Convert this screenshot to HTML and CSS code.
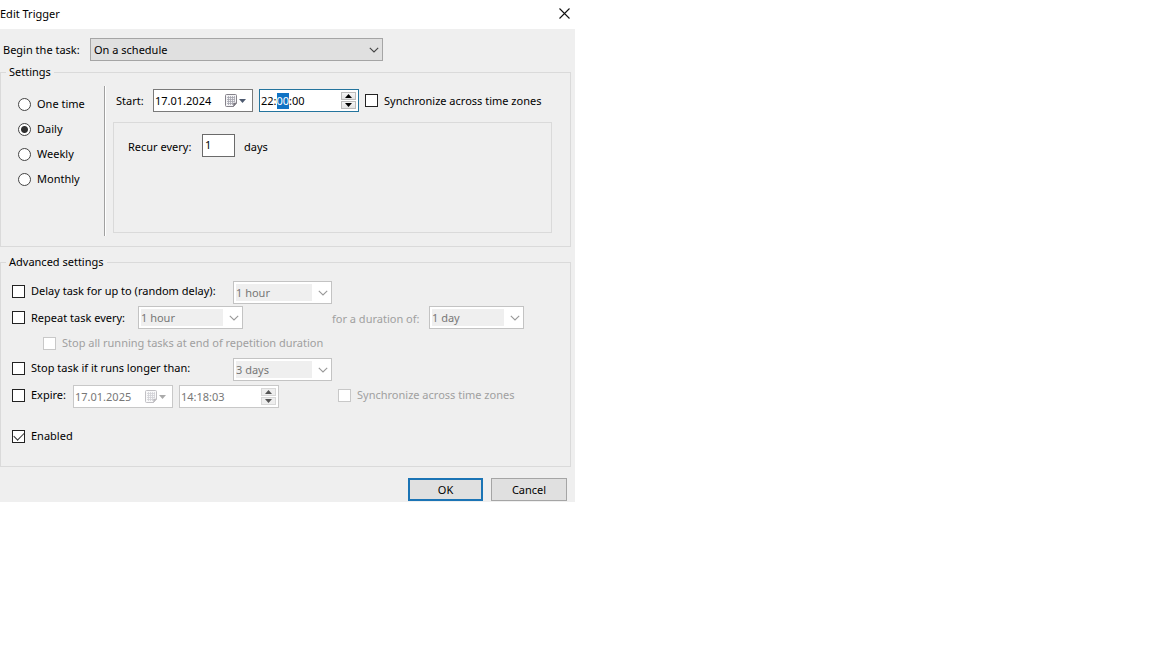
FILE: index.html
```html
<!DOCTYPE html>
<html lang="en">
<head>
<meta charset="utf-8">
<title>Edit Trigger</title>
<link rel="stylesheet" href="styles.css">
</head>
<body>
<svg class="symbols" aria-hidden="true">
  <symbol id="chevron" viewBox="0 0 10 6"><path d="M.8 .8 5 5 9.200 .8" fill="none" stroke="currentColor" stroke-width="1.100"/></symbol>
  <symbol id="up" viewBox="0 0 7 4"><path d="M0 4 3.500 0 7 4z" fill="currentColor"/></symbol>
  <symbol id="down" viewBox="0 0 7 4"><path d="M0 0h7L3.500 4z" fill="currentColor"/></symbol>
  <symbol id="calendar" viewBox="0 0 12 13">
    <path d="M1.500.5h9a1 1 0 0 1 1 1V9L8.500 12.500h-7a1 1 0 0 1-1-1v-10a1 1 0 0 1 1-1z" fill="#f4f4f6" stroke="#85828a"/>
    <path d="M2 3.500h8M2 5.500h8M2 7.500h8M2 9.500h6M3.500 2v9M5.500 2v9M7.500 2v9M9.500 2v6" stroke="#a5a5ae" stroke-width=".8"/>
    <path d="M11.500 9 8.500 12.500V9z" fill="#77747c" stroke="#85828a" stroke-width=".6"/>
  </symbol>
</svg>
<form class="dialog">
  <header class="titlebar">
    <h1 class="title">Edit Trigger</h1>
    <button type="button" class="close" aria-label="Close"><svg width="11" height="11" viewBox="0 0 11 11"><path d="M.5.500 10.500 10.500M10.500.500.500 10.500" stroke="#111" stroke-width="1.100"/></svg></button>
  </header>

  <div class="begin">
    <label for="begin">Begin the task:</label>
    <span class="combo combo-begin">
      <select id="begin"><option>On a schedule</option></select>
      <svg class="chevron"><use href="#chevron"/></svg>
    </span>
  </div>

  <fieldset class="group settings">
    <legend>Settings</legend>
    <div class="settings-body">
      <div class="frequency">
        <label class="option"><input type="radio" name="freq">One time</label>
        <label class="option"><input type="radio" name="freq" checked>Daily</label>
        <label class="option"><input type="radio" name="freq">Weekly</label>
        <label class="option"><input type="radio" name="freq">Monthly</label>
      </div>
      <div class="schedule">
        <div class="start-row">
          <label class="start-label" for="start-date">Start:</label>
          <span class="field">
            <input id="start-date" type="text" value="17.01.2024">
            <button type="button" class="picker" aria-label="Open calendar"><svg class="calendar"><use href="#calendar"/></svg><svg class="arrow"><use href="#down"/></svg></button>
          </span>
          <span class="field field-active">
            <input id="start-time" type="text" value="22:00:00" aria-label="Start time">
            <span class="spinner">
              <button type="button" aria-label="Increase"><svg class="arrow"><use href="#up"/></svg></button>
              <button type="button" aria-label="Decrease"><svg class="arrow"><use href="#down"/></svg></button>
            </span>
          </span>
          <label class="option"><input type="checkbox">Synchronize across time zones</label>
        </div>
        <div class="recur">
          <label class="recur-label" for="recur">Recur every:</label>
          <input id="recur" class="recur-input" type="text" value="1">
          <span>days</span>
        </div>
      </div>
    </div>
  </fieldset>

  <fieldset class="group advanced">
    <legend>Advanced settings</legend>
    <div class="row">
      <label class="option label-wide"><input type="checkbox">Delay task for up to (random delay):</label>
      <span class="combo combo-off combo-medium">
        <select disabled aria-label="Random delay"><option>1 hour</option></select>
        <svg class="chevron"><use href="#chevron"/></svg>
      </span>
    </div>
    <div class="row row-repeat">
      <label class="option label-repeat"><input type="checkbox">Repeat task every:</label>
      <span class="combo combo-off combo-large">
        <select disabled aria-label="Repeat interval"><option>1 hour</option></select>
        <svg class="chevron"><use href="#chevron"/></svg>
      </span>
      <label class="duration-label" for="duration">for a duration of:</label>
      <span class="combo combo-off combo-small">
        <select id="duration" disabled><option>1 day</option></select>
        <svg class="chevron"><use href="#chevron"/></svg>
      </span>
    </div>
    <div class="row row-nested">
      <label class="option option-off"><input type="checkbox" disabled>Stop all running tasks at end of repetition duration</label>
    </div>
    <div class="row">
      <label class="option label-wide"><input type="checkbox">Stop task if it runs longer than:</label>
      <span class="combo combo-off combo-medium">
        <select disabled aria-label="Maximum run time"><option>3 days</option></select>
        <svg class="chevron"><use href="#chevron"/></svg>
      </span>
    </div>
    <div class="row row-expire">
      <label class="option label-expire"><input type="checkbox">Expire:</label>
      <span class="field field-off">
        <input type="text" value="17.01.2025" disabled aria-label="Expiry date">
        <button type="button" class="picker" disabled aria-label="Open calendar"><svg class="calendar"><use href="#calendar"/></svg><svg class="arrow"><use href="#down"/></svg></button>
      </span>
      <span class="field field-off expire-time">
        <input type="text" value="14:18:03" disabled aria-label="Expiry time">
        <span class="spinner">
          <button type="button" disabled aria-label="Increase"><svg class="arrow"><use href="#up"/></svg></button>
          <button type="button" disabled aria-label="Decrease"><svg class="arrow"><use href="#down"/></svg></button>
        </span>
      </span>
      <label class="option option-off expire-sync"><input type="checkbox" disabled>Synchronize across time zones</label>
    </div>
    <div class="row row-enabled">
      <label class="option"><input type="checkbox" checked>Enabled</label>
    </div>
  </fieldset>

  <footer class="actions">
    <button type="submit" class="button button-default">OK</button>
    <button type="button" class="button">Cancel</button>
  </footer>
</form>
<script src="script.js"></script>
</body>
</html>
```
FILE: styles.css
```css
* { box-sizing: border-box; }

body {
  margin: 0;
  background: #fff;
  color: #000;
  font: 11px/16px "Noto Sans", "Open Sans", sans-serif;
}

input, select, button { font: inherit; color: inherit; margin: 0; }
svg { display: block; }
.symbols { position: absolute; width: 0; height: 0; }

.dialog { max-width: 575px; background: #efefef; white-space: nowrap; }

.titlebar {
  display: flex;
  align-items: center;
  justify-content: space-between;
  height: 29px;
  padding: 0 4px 2px 0;
  background: #fff;
}
.title { margin: 0; font-size: 11px; font-weight: 400; }
.close { display: grid; place-items: center; border: 0; padding: 0; width: 13px; height: 21px; background: none; }

.begin { display: flex; align-items: center; padding: 9px 0 3px 3px; }
.begin label { width: 87px; padding-top: 1px; }

/* Drop-downs */
.combo { display: grid; position: relative; color: #000; }
.combo select {
  appearance: none;
  width: 100%;
  height: 23px;
  padding: 0 20px 0 3px;
  border: 1px solid #a5a5a5;
  border-radius: 0;
  background: #e0e0e0;
  opacity: 1;
}
.chevron { position: absolute; right: 4px; top: 9px; width: 10px; height: 6px; color: #444; pointer-events: none; }
.combo-begin { width: 293px; }
.combo-medium { width: 99px; }
.combo-large { width: 105px; }
.combo-small { width: 95px; }
.combo-off select {
  padding-left: 2px;
  border-color: #c3c3c3;
  color: #777;
  background: linear-gradient(#efefef, #efefef) 2px 2px / calc(100% - 21px) calc(100% - 4px) no-repeat #fff;
}
.combo-off .chevron { color: #999; }

/* Group boxes */
.group { min-width: 0; margin: 0 4px 0 0; padding: 0; border: 1px solid #dadada; }
.group legend { margin-left: 5px; padding: 0 3px; }

/* Tick boxes and radio buttons */
.option { display: flex; align-items: center; gap: 6px; }
.option input {
  appearance: none;
  flex: none;
  display: grid;
  place-items: center;
  width: 13px;
  height: 13px;
  border: 1px solid #222;
  background: #fff;
}
.option input[type="radio"] { border-radius: 50%; border-color: #444; }
.option input[type="radio"]:checked { background: radial-gradient(circle, #303030 3px, #fff 4px); }
.option input[type="checkbox"]:checked::after {
  content: "";
  width: 9px;
  height: 5px;
  margin-bottom: 3px;
  border: solid #333;
  border-width: 0 0 1px 1px;
  transform: rotate(-45deg);
}
.option-off { color: #a0a0a0; }
.option-off input { border-color: #c8c8c8; }

.settings-body { display: flex; padding: 6px 18px 10px 17px; }
.frequency {
  display: flex;
  flex-direction: column;
  gap: 9px;
  width: 87px;
  padding-top: 10px;
  border-right: 1px solid #a0a0a0;
  box-shadow: 1px 0 #fff;
}
.schedule { flex: 1; padding: 3px 0 3px 8px; }
.start-row { display: flex; align-items: center; gap: 6px; }
.start-label { width: 31px; margin-left: 3px; }

/* Date and time fields */
.field { display: flex; width: 100px; height: 23px; border: 1px solid #7a7a7a; background: #fff; }
.field input { flex: 1; min-width: 0; padding: 0 0 0 1px; border: 0; outline: 0; background: none; }
.field input::selection { color: #fff; background: #1173c4; }
.field-active { border-color: #24749d; }
.picker { display: flex; align-items: center; gap: 2px; padding: 0 6px 0 0; border: 0; background: none; color: #4d5a70; }
.calendar { width: 12px; height: 13px; }
.arrow { width: 7px; height: 4px; }
.spinner { display: grid; gap: 1px; width: 15px; margin: 2px 2px 2px 0; }
.spinner button {
  display: grid;
  place-items: center;
  min-height: 0;
  padding: 0;
  border: 1px solid #bbb;
  background: linear-gradient(#f5f5f5, #e3e3e3);
}
.field-off { border-color: #c8c8c8; color: #777; }
.field-off .picker { color: #aaa; }
.field-off .calendar { opacity: .5; }
.field-off .spinner button { border-color: #d8d8d8; background: #eee; color: #555; }

.recur {
  display: flex;
  align-items: flex-start;
  height: 111px;
  margin-top: 10px;
  padding: 11px 14px;
  border: 1px solid #dadada;
  line-height: 26px;
}
.recur-label { width: 74px; }
.recur-input { width: 33px; height: 23px; margin-right: 9px; padding: 0 2px 2px; border: 1px solid #6a6a6a; }

.advanced { margin-top: 7px; padding: 11px 11px 22px; }
.advanced legend { margin-left: -6px; }
.row { display: flex; align-items: center; }
.row-repeat { margin-top: 2px; }
.row-nested { padding: 6px 0 7px 31px; }
.row-expire { margin-top: 4px; }
.row-enabled { margin-top: 20px; }
.label-wide { width: 221px; padding-bottom: 3px; }
.label-repeat { width: 126px; }
.label-expire { width: 61px; padding-bottom: 3px; }
.duration-label { width: 97px; margin-left: 89px; padding-top: 2px; color: #a0a0a0; }
.expire-time { margin-left: 6px; }
.expire-sync { margin-left: 59px; padding-bottom: 3px; }

.actions { display: flex; justify-content: flex-end; gap: 8px; padding: 11px 8px 1px; }
.button { width: 76px; height: 23px; padding: 0; border: 1px solid #a5a5a5; background: #e0e0e0; }
.button-default { width: 75px; border: 2px solid #1b74b5; }
```
FILE: script.js
```js
const time = document.getElementById("start-time");
time.focus();
time.setSelectionRange(3, 5);
```
